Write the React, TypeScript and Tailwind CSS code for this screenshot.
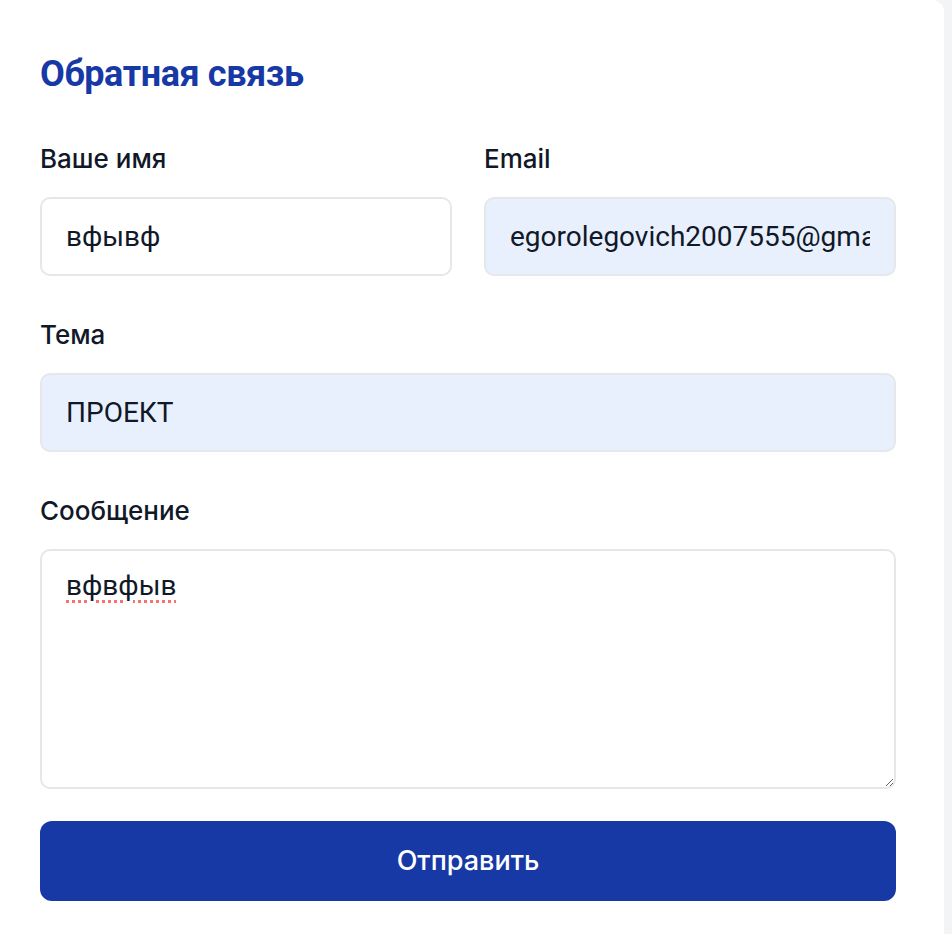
import React from 'react';

const labelCls =
  'block font-[Inter,sans-serif] text-[26px] leading-[32px] font-medium text-[#111827] mb-[22px]';
const inputCls =
  'w-full h-[79px] rounded-[10px] border-2 border-[#e5e7eb] px-6 text-[28px] text-[#111827] outline-none';

export default function App() {
  return (
    <div
      className="h-screen overflow-hidden bg-[#f3f4f6] flex"
      style={{ fontFamily: 'Roboto, "Noto Sans", sans-serif' }}
    >
      {/* Feedback card */}
      <div className="w-[944px] bg-white rounded-tr-xl pt-[54px] pl-10 pr-12 pb-12">
        <h2 className="text-[36px] leading-[40px] font-bold tracking-[-0.4px] text-[#1739a6] mb-[49px]">
          Обратная связь
        </h2>

        <form className="flex flex-col" onSubmit={(e) => e.preventDefault()}>
          <div className="grid grid-cols-2 gap-8 mb-[43px]">
            <div>
              <label className={labelCls}>Ваше имя</label>
              <input className={`${inputCls} bg-white`} defaultValue="вфывф" />
            </div>
            <div>
              <label className={labelCls}>Email</label>
              <input
                className={`${inputCls} bg-[#e8f0fe]`}
                defaultValue="egorolegovich2007555@gmail.com"
              />
            </div>
          </div>

          <div className="mb-[43px]">
            <label className={labelCls}>Тема</label>
            <input className={`${inputCls} bg-[#e8f0fe]`} defaultValue="ПРОЕКТ" />
          </div>

          <div className="mb-8">
            <label className={labelCls}>Сообщение</label>
            <textarea
              spellCheck={false}
              className="block w-full h-[240px] rounded-[10px] border-2 border-[#e5e7eb] px-6 pt-[18px] text-[28px] leading-[33px] text-[#111827] outline-none underline decoration-dotted decoration-[#f87171] decoration-[3px] underline-offset-[5px]"
              defaultValue="вфвфыв"
            />
          </div>

          <button
            type="submit"
            className="w-full h-[80px] rounded-xl bg-[#1739a6] text-white font-[Inter,sans-serif] text-[27px] font-medium"
          >
            Отправить
          </button>
        </form>
      </div>
    </div>
  );
}
